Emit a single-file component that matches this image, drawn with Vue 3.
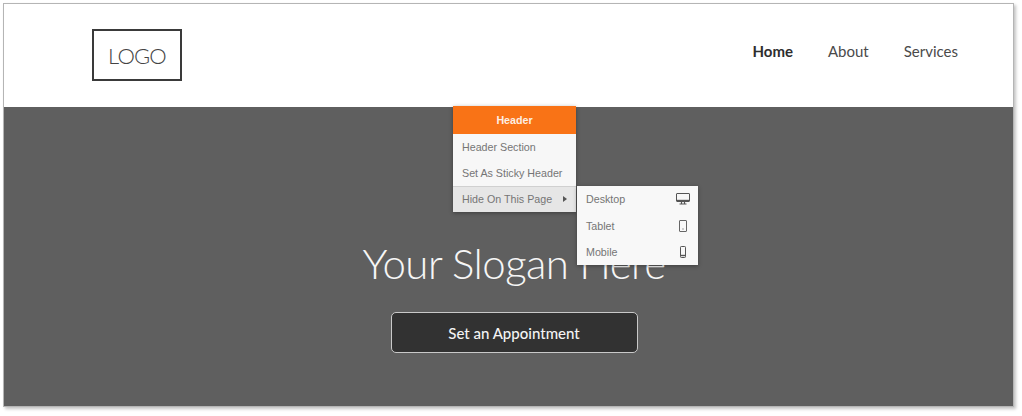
<template>
  <div class="page">
    <div class="frame">
      <header class="topbar">
        <div class="logo">LOGO</div>
        <nav class="nav">
          <a v-for="link in links" :key="link" class="nav-link" :class="{ active: link === 'Home' }">{{ link }}</a>
        </nav>
      </header>
      <section class="hero">
        <h1 class="slogan">Your Slogan Here</h1>
        <button class="cta">Set an Appointment</button>

        <div class="menu">
          <div class="menu-title">Header</div>
          <div class="menu-item">Header Section</div>
          <div class="menu-item">Set As Sticky Header</div>
          <div class="menu-item hover">
            <span>Hide On This Page</span>
            <span class="caret"></span>
          </div>
        </div>

        <div class="submenu">
          <div class="sub-item first">
            <span>Desktop</span>
            <svg width="14" height="12" viewBox="0 0 14 12" fill="none" stroke="#555">
              <rect x="0.5" y="0.5" width="13" height="8" rx="0.5" />
              <path d="M1 7.5H13" stroke-width="1.4" />
              <path d="M5.5 9V10.5M8.5 9V10.5M3.5 11H10.5" stroke-width="1.2" />
            </svg>
          </div>
          <div class="sub-item">
            <span>Tablet</span>
            <svg width="14" height="12" viewBox="0 0 14 12" fill="none" stroke="#666">
              <rect x="3.5" y="0.5" width="7" height="11" rx="0.5" />
              <path d="M6.5 9H7.5" stroke="#444" />
            </svg>
          </div>
          <div class="sub-item">
            <span>Mobile</span>
            <svg width="14" height="12" viewBox="0 0 14 12" fill="none" stroke="#555">
              <rect x="4.5" y="0.5" width="5" height="11" rx="0.8" />
              <path d="M5 9.5H9" stroke-width="1.4" />
            </svg>
          </div>
        </div>
      </section>
    </div>
  </div>
</template>

<script setup>
const links = ['Home', 'About', 'Services']
</script>

<style>
html, body {
  background: #fff;
}
</style>

<style scoped>
.page {
  width: 1022px;
  height: 416px;
  padding: 3px 0 0 3px;
  box-sizing: border-box;
  overflow: hidden;
  font-family: Lato, "Noto Sans", sans-serif;
}

.frame {
  width: 1011px;
  height: 404px;
  box-sizing: border-box;
  border: 1px solid #b5b5b5;
  box-shadow: 2px 2px 3px #c4c4c4;
  display: flex;
  flex-direction: column;
}

.topbar {
  height: 103px;
  box-sizing: border-box;
  flex-shrink: 0;
  background: #fff;
  display: flex;
  align-items: center;
  justify-content: space-between;
  padding: 0 55px 0 88px;
}

.logo {
  width: 90px;
  height: 52px;
  margin-bottom: 1px;
  box-sizing: border-box;
  border: 2px solid #3a3a3a;
  display: flex;
  align-items: center;
  justify-content: center;
  font-size: 22px;
  letter-spacing: -0.8px;
  font-weight: 300;
  color: #444;
}

.nav {
  display: flex;
  gap: 35px;
  margin-bottom: 10px;
}

.nav-link {
  font-size: 15px;
  color: #4a4a4a;
}

.nav-link.active {
  font-weight: 700;
  color: #2e2e2e;
}

.hero {
  flex: 1;
  position: relative;
  background: #5f5f5f;
  display: flex;
  flex-direction: column;
  align-items: center;
  padding: 128px 0 0 11px;
}

.slogan {
  margin: 0;
  font-size: 42px;
  letter-spacing: -0.55px;
  line-height: 56px;
  font-weight: 300;
  color: #f6f6f6;
}

.cta {
  margin-top: 21px;
  width: 247px;
  height: 41px;
  box-sizing: border-box;
  border: 1px solid #c9c9c9;
  border-radius: 5px;
  background: #323232;
  color: #f4f4f4;
  font-family: inherit;
  font-size: 15px;
  font-weight: 500;
}

.menu {
  position: absolute;
  left: 449px;
  top: -1px;
  width: 123px;
  background: #f7f7f7;
  box-shadow: 0 1px 4px rgba(0, 0, 0, 0.35);
  font-family: "Liberation Sans", Arial, sans-serif;
  font-size: 10.7px;
  color: #757575;
}

.menu-title {
  height: 28px;
  line-height: 28px;
  text-align: center;
  background: #f97316;
  color: #fdeee2;
  font-weight: 700;
}

.menu-item {
  height: 26px;
  display: flex;
  align-items: center;
  justify-content: space-between;
  padding: 0 9px;
}

.menu-item.hover {
  background: #e6e6e6;
  border-top: 1px solid #d0d0d0;
  box-sizing: border-box;
  padding-bottom: 2px;
}

.caret {
  width: 0;
  height: 0;
  border-left: 4px solid #555;
  border-top: 3px solid transparent;
  border-bottom: 3px solid transparent;
}

.submenu {
  position: absolute;
  left: 573px;
  top: 79px;
  width: 121px;
  background: #f8f8f8;
  box-shadow: 0 1px 4px rgba(0, 0, 0, 0.35);
  font-family: "Liberation Sans", Arial, sans-serif;
  font-size: 10.7px;
  color: #757575;
}

.sub-item {
  height: 26px;
  display: flex;
  align-items: center;
  justify-content: space-between;
  padding: 0 8px 0 9px;
}

.sub-item.first {
  height: 27px;
  padding-bottom: 1px;
  box-sizing: border-box;
}
</style>
